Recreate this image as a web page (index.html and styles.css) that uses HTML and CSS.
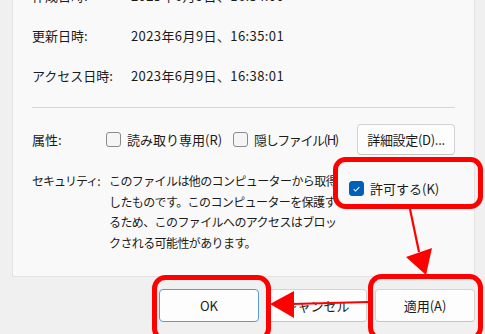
FILE: index.html
```html
<!DOCTYPE html>
<html lang="ja">
  <head>
    <meta charset="UTF-8" />
    <title>プロパティ</title>
    <link rel="stylesheet" href="styles.css">
  </head>
  <body>
    <div class="dialog">
      <div class="panel">
        <div class="info-row">
          <span class="label">作成日時:</span>
          <span class="value">2023年6月9日、16:34:00</span>
        </div>
        <div class="info-row">
          <span class="label">更新日時:</span>
          <span class="value">2023年6月9日、16:35:01</span>
        </div>
        <div class="info-row">
          <span class="label">アクセス日時:</span>
          <span class="value">2023年6月9日、16:38:01</span>
        </div>

        <div class="divider"></div>

        <div class="attr-row">
          <span class="label attr-label">属性:</span>
          <label class="check"><span class="box"></span>読み取り専用(R)</label>
          <label class="check check-hidden"><span class="box"></span><span class="narrow">隠しファイル(H)</span></label>
          <button class="btn btn-detail">詳細設定(D)...</button>
        </div>

        <div class="security-row">
          <span class="label sec-label">セキュリティ:</span>
          <p class="sec-text">このファイルは他のコンピューターから取得<br>したものです。このコンピューターを保護す<br>るため、このファイルへのアクセスはブロッ<br>クされる可能性があります。</p>
          <label class="check check-allow">
            <span class="box checked">
              <svg width="14" height="14" viewBox="0 0 14 14"><path d="M4 7.2 L6 9.2 L10 5" fill="none" stroke="#fff" stroke-width="1.1"/></svg>
            </span>許可する(K)
          </label>
        </div>
      </div>

      <div class="footer">
        <button class="btn btn-ok">OK</button>
        <button class="btn">キャンセル</button>
        <button class="btn">適用(A)</button>
      </div>
    </div>

    <!-- annotation overlay -->
    <svg class="marks" width="485" height="334" viewBox="0 0 485 334">
      <g fill="none" stroke="#ff0000" stroke-width="5">
        <rect x="335.5" y="159.5" width="145" height="47" rx="10" />
        <rect x="154.5" y="277.5" width="114" height="62" rx="11" />
        <rect x="370.5" y="276.5" width="110" height="62" rx="11" />
      </g>
      <g stroke="#ff0000" stroke-width="2.2">
        <line x1="410" y1="209" x2="419" y2="252" />
        <line x1="368" y1="302" x2="292" y2="304" />
      </g>
      <g fill="#ff0000">
        <polygon points="406,257 432,248 426,275" />
        <polygon points="270,304 294,291 294,318" />
      </g>
    </svg>
  </body>
</html>
```

FILE: styles.css
```css
html,
body {
  margin: 0;
  height: 100%;
  overflow: hidden;
}

body {
  background-color: #f0f0f0;
  font-family: "Noto Sans CJK JP", "Noto Sans", sans-serif;
  font-size: 13px;
  color: #1b1b1b;
  position: relative;
}

.dialog {
  padding-left: 12px;
  width: 463px;
}

.panel {
  margin-top: -25px;
  height: 302px;
  background-color: #f9f9f9;
  border: 1px solid #e3e3e3;
  border-top: none;
  box-sizing: border-box;
  padding: 0 19px;
}

.info-row {
  height: 40px;
  display: flex;
  align-items: center;
}

.label {
  width: 99px;
  flex-shrink: 0;
}

.value {
  letter-spacing: 0.4px;
}

.divider {
  margin-top: 12px;
  height: 1px;
  background-color: #d6d6d6;
}

.attr-row {
  margin-top: 16px;
  height: 31px;
  display: flex;
  align-items: center;
}

.attr-label {
  width: 74px;
}

.check {
  display: flex;
  align-items: center;
  gap: 6px;
}

.check-hidden {
  margin-left: 11px;
}

.narrow {
  letter-spacing: -1.4px;
}

.box {
  width: 13px;
  height: 13px;
  border: 1px solid #8b8b8b;
  border-radius: 3px;
  background-color: #f5f5f5;
  display: inline-flex;
  align-items: center;
  justify-content: center;
}

.box.checked {
  background-color: #005fb8;
  border-color: #005fb8;
}

.btn {
  font-family: inherit;
  font-size: 13px;
  color: #1b1b1b;
  background-color: #fdfdfd;
  border: 1px solid #d3d3d3;
  border-bottom-color: #c4c4c4;
  border-radius: 4px;
  height: 33px;
  width: 100px;
  padding: 0;
}

.btn-detail {
  margin-left: auto;
  width: 98px;
  height: 31px;
  letter-spacing: -0.3px;
}

.security-row {
  margin-top: 16px;
  display: flex;
  align-items: flex-start;
}

.sec-label {
  width: 77px;
  font-size: 12px;
  line-height: 20.5px;
  letter-spacing: -1px;
}

.sec-text {
  margin: 0;
  font-size: 12px;
  line-height: 20.5px;
  letter-spacing: -0.6px;
  width: 232px;
}

.check-allow {
  margin-left: 8px;
  margin-top: 8px;
}

.footer {
  margin-top: 12px;
  display: flex;
  justify-content: flex-end;
  gap: 8px;
}

.btn-ok {
  border-color: #5b9bd5;
}

.marks {
  position: absolute;
  top: 0;
  left: 0;
  pointer-events: none;
}
```
